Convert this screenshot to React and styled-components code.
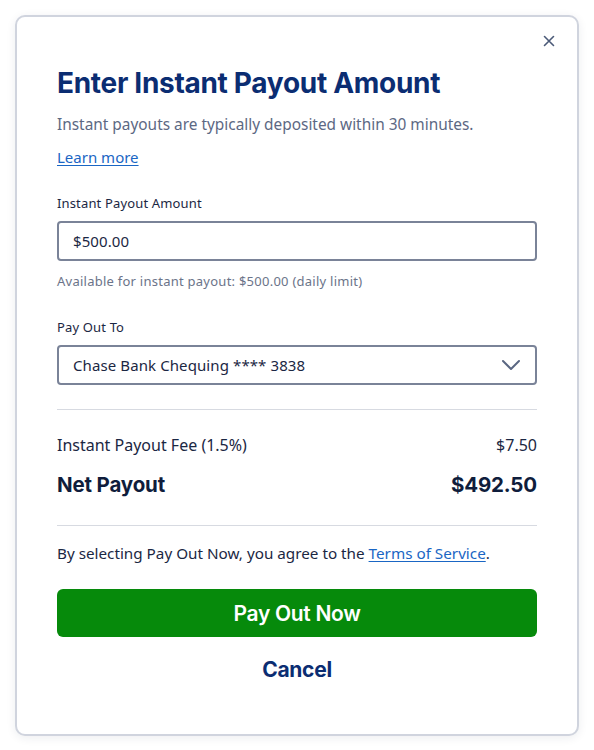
import React from "react";
import styled, { createGlobalStyle } from "styled-components";

const Global = createGlobalStyle`
  * { box-sizing: border-box; }
  html, body { margin: 0; padding: 0; background: #ffffff; }
  body { font-family: "Noto Sans", "Open Sans", sans-serif; color: #1b2743; }
`;

const Page = styled.div`
  padding: 15px 15px 16px;
`;

const Card = styled.div`
  position: relative;
  background: #fff;
  border: 2px solid #d0d4de;
  border-radius: 10px;
  box-shadow: 0 2px 10px rgba(30, 40, 70, 0.08);
  padding: 50px 40px 45px;
  display: flex;
  flex-direction: column;
`;

const CloseButton = styled.button`
  position: absolute;
  top: 13px;
  right: 17px;
  width: 22px;
  height: 22px;
  padding: 0;
  border: none;
  background: transparent;
  display: flex;
  align-items: center;
  justify-content: center;
  cursor: pointer;
`;

const Title = styled.h1`
  margin: 0;
  font-family: Inter, "Liberation Sans", sans-serif;
  font-weight: 700;
  font-size: 28px;
  line-height: 32px;
  letter-spacing: -0.3px;
  color: #0b2d72;
`;

const Subtitle = styled.p`
  margin: 15px 0 0;
  font-size: 15.4px;
  line-height: 22px;
  color: #5c6883;
`;

const Link = styled.a`
  color: #1a66c4;
  text-decoration: underline;
  text-underline-offset: 2px;
  cursor: pointer;
`;

const LearnMore = styled(Link)`
  margin-top: 10px;
  font-size: 15px;
  line-height: 22px;
  align-self: flex-start;
`;

const Field = styled.div`
  display: flex;
  flex-direction: column;
  margin-top: ${(p) => p.$top}px;
`;

const Label = styled.label`
  font-size: 13px;
  letter-spacing: 0.15px;
  line-height: 18px;
  color: #1b2743;
  margin-bottom: 9px;
`;

const Box = styled.div`
  height: 40px;
  border: 2px solid #7a8398;
  border-radius: 4px;
  display: flex;
  align-items: center;
  justify-content: space-between;
  padding: 0 14px 0 14px;
  font-size: 15px;
  letter-spacing: 0.1px;
  color: #1b2743;
  background: #fff;
`;

const Helper = styled.div`
  margin-top: 11px;
  font-size: 13px;
  letter-spacing: 0.25px;
  line-height: 18px;
  color: #6b7489;
`;

const Divider = styled.hr`
  border: none;
  border-top: 1px solid #d7dae1;
  margin: ${(p) => p.$m};
  width: 100%;
`;

const Row = styled.div`
  display: flex;
  justify-content: space-between;
  align-items: center;
  margin-top: ${(p) => p.$top}px;
`;

const FeeText = styled.span`
  font-size: 16px;
  line-height: 22px;
  color: #1b2743;
`;

const NetText = styled.span`
  font-family: Inter, "Liberation Sans", sans-serif;
  font-weight: 700;
  font-size: 20.5px;
  line-height: 26px;
  letter-spacing: -0.15px;
  color: #0f1d3c;
`;

const Terms = styled.p`
  margin: 0;
  font-size: 15.25px;
  line-height: 22px;
  color: #1b2743;
`;

const PrimaryButton = styled.button`
  margin-top: 25px;
  height: 48px;
  border: none;
  border-radius: 6px;
  background: #068a0b;
  color: #fff;
  font-family: Inter, "Liberation Sans", sans-serif;
  font-weight: 600;
  font-size: 21px;
  letter-spacing: -0.3px;
  cursor: pointer;
`;

const CancelButton = styled.button`
  margin-top: 12px;
  align-self: center;
  height: 40px;
  border: none;
  background: transparent;
  color: #0b2d72;
  font-family: Inter, "Liberation Sans", sans-serif;
  font-weight: 700;
  font-size: 21px;
  letter-spacing: -0.3px;
  cursor: pointer;
`;

export default function App() {
  return (
    <>
      <Global />
      <Page>
        <Card>
          <CloseButton aria-label="Close">
            <svg width="12" height="12" viewBox="0 0 12 12">
              <path d="M1.5 1.5L10.5 10.5M10.5 1.5L1.5 10.5" stroke="#4b5a78" strokeWidth="1.6" strokeLinecap="round" />
            </svg>
          </CloseButton>
          <Title>Enter Instant Payout Amount</Title>
          <Subtitle>Instant payouts are typically deposited within 30 minutes.</Subtitle>
          <LearnMore>Learn more</LearnMore>

          <Field $top={26}>
            <Label>Instant Payout Amount</Label>
            <Box>$500.00</Box>
            <Helper>Available for instant payout: $500.00 (daily limit)</Helper>
          </Field>

          <Field $top={28}>
            <Label>Pay Out To</Label>
            <Box>
              <span>Chase Bank Chequing **** 3838</span>
              <svg width="20" height="12" viewBox="0 0 20 12">
                <path d="M2 2L10 10L18 2" stroke="#5a6782" strokeWidth="2" fill="none" strokeLinecap="round" strokeLinejoin="round" />
              </svg>
            </Box>
          </Field>

          <Divider $m="24px 0 0" />
          <Row $top={24}>
            <FeeText>Instant Payout Fee (1.5%)</FeeText>
            <FeeText>$7.50</FeeText>
          </Row>
          <Row $top={16}>
            <NetText>Net Payout</NetText>
            <NetText>$492.50</NetText>
          </Row>
          <Divider $m="27px 0 16px" />
          <Terms>
            By selecting Pay Out Now, you agree to the <Link>Terms of Service</Link>.
          </Terms>
          <PrimaryButton>Pay Out Now</PrimaryButton>
          <CancelButton>Cancel</CancelButton>
        </Card>
      </Page>
    </>
  );
}
